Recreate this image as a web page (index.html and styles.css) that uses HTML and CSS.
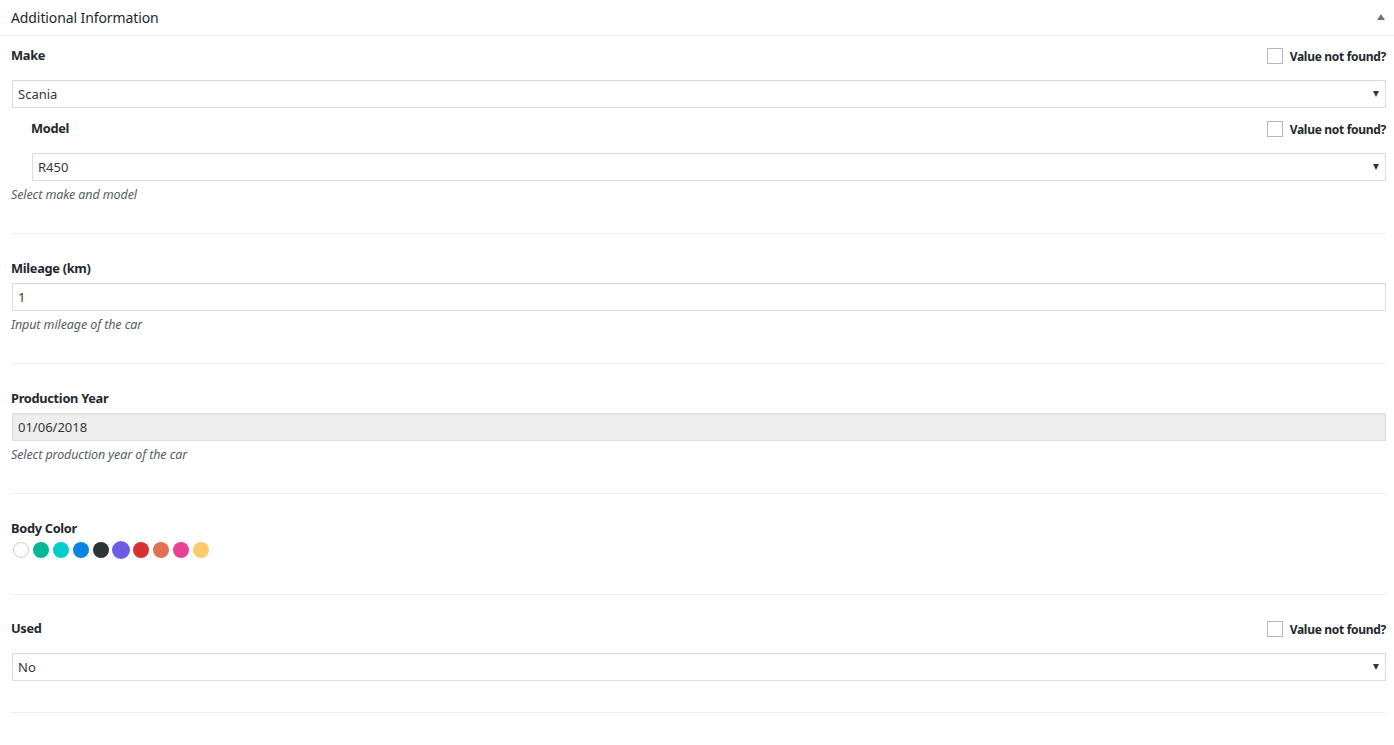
FILE: index.html
```html
<!DOCTYPE html>
<html lang="en">
<head>
<meta charset="UTF-8">
<title>Additional Information</title>
<link rel="stylesheet" href="styles.css">
</head>
<body>
<div class="postbox">
	<div class="postbox-head">
		<h2>Additional Information</h2>
		<span class="toggle-arrow"></span>
	</div>

	<div class="field field-first">
		<div class="field-row">
			<label class="field-label">Make</label>
			<label class="not-found"><span class="checkbox"></span>Value not found?</label>
		</div>
		<div class="select"><span>Scania</span><span class="caret"></span></div>

		<div class="subfield">
			<div class="field-row">
				<label class="field-label">Model</label>
				<label class="not-found"><span class="checkbox"></span>Value not found?</label>
			</div>
			<div class="select"><span>R450</span><span class="caret"></span></div>
		</div>
		<p class="help">Select make and model</p>
	</div>

	<div class="field">
		<label class="field-label">Mileage (km)</label>
		<div class="input">1</div>
		<p class="help">Input mileage of the car</p>
	</div>

	<div class="field">
		<label class="field-label">Production Year</label>
		<div class="input input-disabled">01/06/2018</div>
		<p class="help">Select production year of the car</p>
	</div>

	<div class="field field-colors">
		<label class="field-label">Body Color</label>
		<div class="swatches">
			<span class="swatch swatch-white"></span>
			<span class="swatch" style="background:#00b894"></span>
			<span class="swatch" style="background:#00cec9"></span>
			<span class="swatch" style="background:#0984e3"></span>
			<span class="swatch" style="background:#2d3436"></span>
			<span class="swatch swatch-active" style="background:#6c5ce7"></span>
			<span class="swatch" style="background:#d63031"></span>
			<span class="swatch" style="background:#e17055"></span>
			<span class="swatch" style="background:#e84393"></span>
			<span class="swatch" style="background:#fdcb6e"></span>
		</div>
	</div>

	<div class="field field-last">
		<div class="field-row">
			<label class="field-label">Used</label>
			<label class="not-found"><span class="checkbox"></span>Value not found?</label>
		</div>
		<div class="select"><span>No</span><span class="caret"></span></div>
	</div>
</div>
</body>
</html>
```

FILE: styles.css
```css
* {margin:0; padding:0; box-sizing:border-box;}
body {background:#fff; font-family:"Noto Sans", "Open Sans", sans-serif; font-size:13px; color:#23282d;}

.postbox {width:1394px; background:#fff;}
.postbox-head {height:36px; border-bottom:1px solid #eee; display:flex; align-items:center; justify-content:space-between; padding:0 9px 0 11px;}
.postbox-head h2 {font-size:14px; font-weight:normal; color:#23282d; letter-spacing:-0.1px;}
.toggle-arrow {width:0; height:0; border-left:4px solid transparent; border-right:4px solid transparent; border-bottom:6px solid #72777c; margin-top:-1px;}

.field {margin:0 8px 0 11px; border-bottom:1px solid #eee; padding:25px 0 29px 0;}
.field-first {padding-top:11px; padding-bottom:29px;}
.field-colors {padding-bottom:35px;}
.field-last {padding-top:25px; padding-bottom:31px;}

.field-row {display:flex; align-items:center; justify-content:space-between; height:18px; margin-bottom:15px;}
.field-label {display:block; font-weight:bold; font-size:12.8px; line-height:18px; letter-spacing:-0.3px;}
.field-row .field-label {margin-bottom:2px;}
.field > .field-label {margin-bottom:6px;}

.not-found {display:flex; align-items:center; font-weight:bold; font-size:12px; letter-spacing:-0.3px;}
.checkbox {width:16px; height:16px; border:1px solid #b4b9be; background:#fff; margin-right:7px;}

.select, .input {height:28px; border:1px solid #ddd; background:#fff; display:flex; align-items:center; justify-content:space-between; padding:0 6px 0 5px; font-size:13px; color:#32373c; margin-left:1px; box-shadow:inset 0 1px 2px rgba(0,0,0,.04);}
.input-disabled {background:#eee;}
.caret {width:0; height:0; border-left:3.5px solid transparent; border-right:3.5px solid transparent; border-top:6px solid #32373c;}

.subfield {padding-left:20px; margin-top:12px;}

.help {font-style:italic; font-size:12.5px; color:#555d66; line-height:18px; margin-top:5px; letter-spacing:-0.1px;}

.swatches {display:flex; align-items:center; gap:4px; margin:-2px 0 0 2px; height:18px;}
.swatch {width:16px; height:16px; border-radius:50%; display:block;}
.swatch-white {background:#fff; border:1px solid #ccc;}
.swatch-active {width:18px; height:18px; margin:0 -1px;}
```
